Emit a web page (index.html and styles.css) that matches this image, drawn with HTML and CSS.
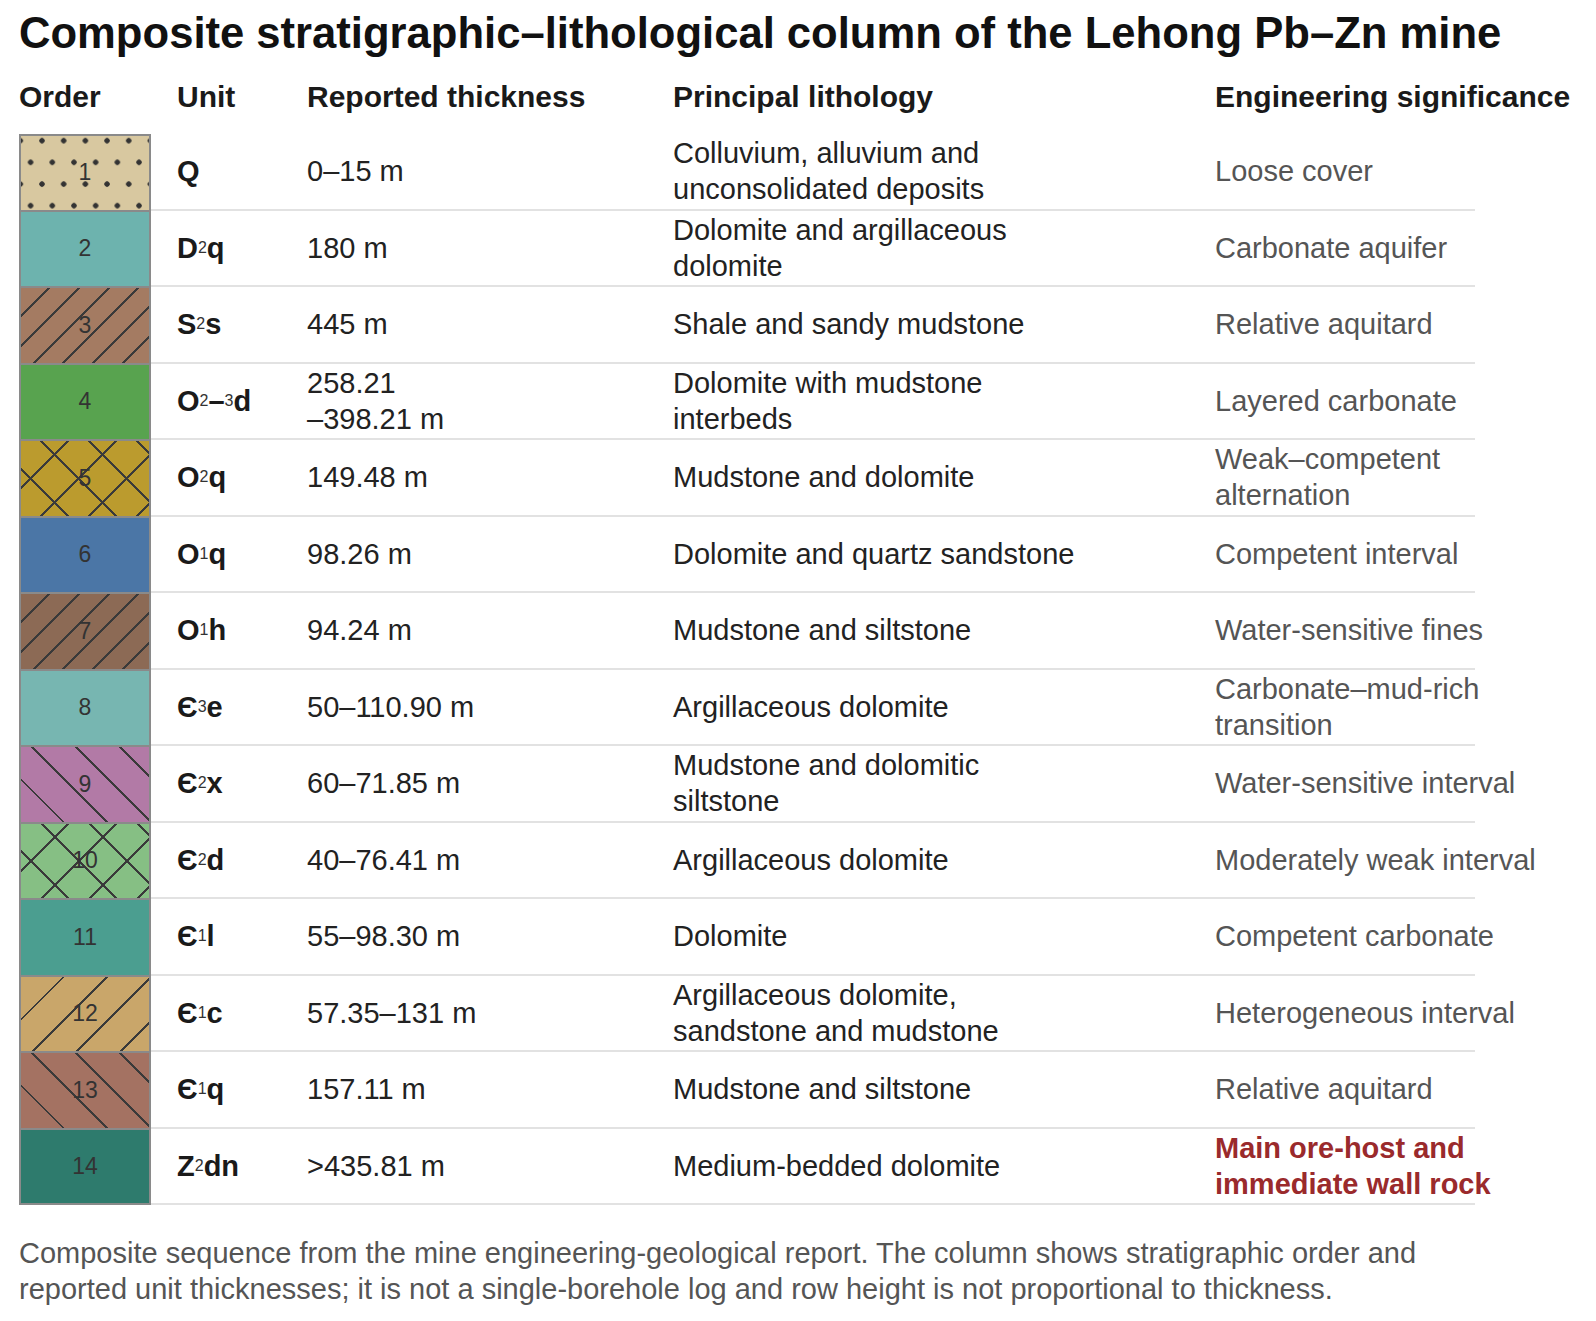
FILE: index.html
```html
<!DOCTYPE html>
<html lang="en">
<head>
<meta charset="utf-8">
<title>Composite stratigraphic–lithological column of the Lehong Pb–Zn mine</title>
<link rel="stylesheet" href="styles.css">
</head>
<body>
<main class="page">
  <h1 class="title">Composite stratigraphic–lithological column of the Lehong Pb–Zn mine</h1>
  <div class="grid thead">
    <div class="th">Order</div>
    <div class="th pad">Unit</div>
    <div class="th">Reported thickness</div>
    <div class="th">Principal lithology</div>
    <div class="th">Engineering significance</div>
  </div>
  <div class="rows">
    <div class="grid row">
      <div class="swatch sw1">1</div>
      <div class="cell unit">Q</div>
      <div class="cell thick"><span>0–15 m</span></div>
      <div class="cell litho"><span>Colluvium, alluvium and unconsolidated deposits</span></div>
      <div class="cell sig"><span>Loose cover</span></div>
    </div>
    <div class="grid row">
      <div class="swatch sw2">2</div>
      <div class="cell unit">D<span class="sub">2</span>q</div>
      <div class="cell thick"><span>180 m</span></div>
      <div class="cell litho"><span>Dolomite and argillaceous dolomite</span></div>
      <div class="cell sig"><span>Carbonate aquifer</span></div>
    </div>
    <div class="grid row">
      <div class="swatch sw3">3</div>
      <div class="cell unit">S<span class="sub">2</span>s</div>
      <div class="cell thick"><span>445 m</span></div>
      <div class="cell litho"><span>Shale and sandy mudstone</span></div>
      <div class="cell sig"><span>Relative aquitard</span></div>
    </div>
    <div class="grid row">
      <div class="swatch sw4">4</div>
      <div class="cell unit">O<span class="sub">2</span>–<span class="sub">3</span>d</div>
      <div class="cell thick"><span>258.21 <span class="nb">–398.21 m</span></span></div>
      <div class="cell litho"><span>Dolomite with mudstone interbeds</span></div>
      <div class="cell sig"><span>Layered carbonate</span></div>
    </div>
    <div class="grid row">
      <div class="swatch sw5">5</div>
      <div class="cell unit">O<span class="sub">2</span>q</div>
      <div class="cell thick"><span>149.48 m</span></div>
      <div class="cell litho"><span>Mudstone and dolomite</span></div>
      <div class="cell sig"><span>Weak–competent alternation</span></div>
    </div>
    <div class="grid row">
      <div class="swatch sw6">6</div>
      <div class="cell unit">O<span class="sub">1</span>q</div>
      <div class="cell thick"><span>98.26 m</span></div>
      <div class="cell litho"><span>Dolomite and quartz sandstone</span></div>
      <div class="cell sig"><span>Competent interval</span></div>
    </div>
    <div class="grid row">
      <div class="swatch sw7">7</div>
      <div class="cell unit">O<span class="sub">1</span>h</div>
      <div class="cell thick"><span>94.24 m</span></div>
      <div class="cell litho"><span>Mudstone and siltstone</span></div>
      <div class="cell sig"><span>Water-sensitive fines</span></div>
    </div>
    <div class="grid row">
      <div class="swatch sw8">8</div>
      <div class="cell unit">Є<span class="sub">3</span>e</div>
      <div class="cell thick"><span>50–110.90 m</span></div>
      <div class="cell litho"><span>Argillaceous dolomite</span></div>
      <div class="cell sig"><span>Carbonate–mud-rich transition</span></div>
    </div>
    <div class="grid row">
      <div class="swatch sw9">9</div>
      <div class="cell unit">Є<span class="sub">2</span>x</div>
      <div class="cell thick"><span>60–71.85 m</span></div>
      <div class="cell litho"><span>Mudstone and dolomitic siltstone</span></div>
      <div class="cell sig"><span>Water-sensitive interval</span></div>
    </div>
    <div class="grid row">
      <div class="swatch sw10">10</div>
      <div class="cell unit">Є<span class="sub">2</span>d</div>
      <div class="cell thick"><span>40–76.41 m</span></div>
      <div class="cell litho"><span>Argillaceous dolomite</span></div>
      <div class="cell sig"><span>Moderately weak interval</span></div>
    </div>
    <div class="grid row">
      <div class="swatch sw11">11</div>
      <div class="cell unit">Є<span class="sub">1</span>l</div>
      <div class="cell thick"><span>55–98.30 m</span></div>
      <div class="cell litho"><span>Dolomite</span></div>
      <div class="cell sig"><span>Competent carbonate</span></div>
    </div>
    <div class="grid row">
      <div class="swatch sw12">12</div>
      <div class="cell unit">Є<span class="sub">1</span>c</div>
      <div class="cell thick"><span>57.35–131 m</span></div>
      <div class="cell litho"><span>Argillaceous dolomite, sandstone and mudstone</span></div>
      <div class="cell sig"><span>Heterogeneous interval</span></div>
    </div>
    <div class="grid row">
      <div class="swatch sw13">13</div>
      <div class="cell unit">Є<span class="sub">1</span>q</div>
      <div class="cell thick"><span>157.11 m</span></div>
      <div class="cell litho"><span>Mudstone and siltstone</span></div>
      <div class="cell sig"><span>Relative aquitard</span></div>
    </div>
    <div class="grid row">
      <div class="swatch sw14">14</div>
      <div class="cell unit">Z<span class="sub">2</span>dn</div>
      <div class="cell thick"><span>&gt;435.81 m</span></div>
      <div class="cell litho"><span>Medium-bedded dolomite</span></div>
      <div class="cell sig"><span class="key">Main ore-host and immediate wall rock</span></div>
    </div>
  </div>
  <p class="note">Composite sequence from the mine engineering-geological report. The column shows stratigraphic order and reported unit thicknesses; it is not a single-borehole log and row height is not proportional to thickness.</p>
</main>
</body>
</html>
```

FILE: styles.css
```css
* { box-sizing: border-box; }

body {
  margin: 0;
  background: #ffffff;
  font-family: "Liberation Sans", Arial, sans-serif;
  color: #222222;
}

.page {
  padding: 8px 19px 0 19px;
}

.title {
  margin: 0;
  font-size: 43.6px;
  line-height: 50px;
  font-weight: 700;
  color: #111111;
  white-space: nowrap;
}

.grid {
  display: grid;
  grid-template-columns: 132px 156px 366px 542px 260px;
}

.thead {
  margin-top: 21px;
}

.th {
  font-size: 30px;
  line-height: 36px;
  font-weight: 700;
  color: #1a1a1a;
  white-space: nowrap;
}

.th.pad {
  padding-left: 26px;
}

.rows {
  margin-top: 19px;
}

.row {
  height: 76.5px;
}

.cell {
  display: flex;
  align-items: center;
  border-bottom: 2px solid #e2e2e2;
  font-size: 29px;
  line-height: 36px;
  color: #222222;
}

.unit {
  padding-left: 26px;
  font-weight: 700;
  color: #1a1a1a;
}

.sub {
  font-size: 16px;
  font-weight: 400;
  vertical-align: -2px;
  color: #333333;
}

.thick span {
  max-width: 190px;
}

.thick .nb {
  white-space: nowrap;
}

.litho span {
  max-width: 410px;
}

.sig span {
  flex: 0 0 343px;
  width: 343px;
  color: #555555;
}

.sig .key {
  color: #9a2a2c;
  font-weight: 700;
}

.swatch {
  display: flex;
  align-items: center;
  justify-content: center;
  border-left: 2px solid #8a8a8a;
  border-right: 2px solid #8a8a8a;
  border-top: 1px solid #8a8a8a;
  border-bottom: 1px solid #8a8a8a;
  font-size: 23px;
  color: #333333;
}

.row:first-child .swatch { border-top-width: 2px; }
.row:last-child .swatch { border-bottom-width: 2px; }

.sw1 {
  background-color: #d8c8a0;
  background-image:
    radial-gradient(circle, #333333 2.4px, transparent 3px),
    radial-gradient(circle, #333333 2.4px, transparent 3px);
  background-size: 21.7px 43.4px;
  background-position: 10.15px -17px, -1.25px 4.6px;
}

.sw2 { background-color: #6db3ae; }

.sw3 {
  background-color: #a47b62;
  background-image: repeating-linear-gradient(135deg, transparent 0 19px, #3a3a3a 19px 21px);
}

.sw4 { background-color: #58a34f; }

.sw5 {
  background-color: #bb9b2e;
  background-image:
    repeating-linear-gradient(45deg, transparent 0 32px, #3a3a3a 32px 34px),
    repeating-linear-gradient(135deg, transparent 0 32px, #3a3a3a 32px 34px);
}

.sw6 { background-color: #4b76a6; }

.sw7 {
  background-color: #8c6a55;
  background-image: repeating-linear-gradient(135deg, transparent 0 19px, #3a3a3a 19px 21px);
}

.sw8 { background-color: #77b6b1; }

.sw9 {
  background-color: #b27aa6;
  background-image: repeating-linear-gradient(45deg, transparent 0 29px, #3a3a3a 29px 31px);
}

.sw10 {
  background-color: #86bf84;
  background-image:
    repeating-linear-gradient(45deg, transparent 0 32px, #3a3a3a 32px 34px),
    repeating-linear-gradient(135deg, transparent 0 32px, #3a3a3a 32px 34px);
}

.sw11 { background-color: #4b9e90; }

.sw12 {
  background-color: #c9a66a;
  background-image: repeating-linear-gradient(135deg, transparent 0 29px, #3a3a3a 29px 31px);
}

.sw13 {
  background-color: #a47262;
  background-image: repeating-linear-gradient(45deg, transparent 0 29px, #3a3a3a 29px 31px);
}

.sw14 { background-color: #2e7b6d; }

.note {
  margin: 30px 0 0 0;
  max-width: 1460px;
  font-size: 29px;
  line-height: 36px;
  color: #555555;
}
```
